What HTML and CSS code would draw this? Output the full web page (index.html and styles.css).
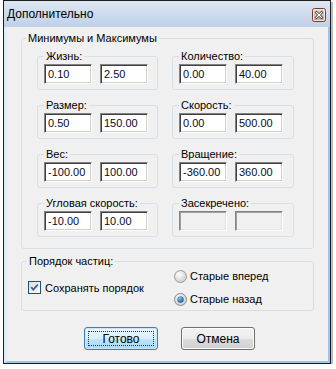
FILE: index.html
```html
<!DOCTYPE html>
<html lang="ru">
<head>
<meta charset="utf-8">
<title>Дополнительно</title>
<link rel="stylesheet" href="styles.css">
</head>
<body>
<div class="window">
  <div class="titlebar">
    <span class="title">Дополнительно</span>
    <span class="close">
      <svg width="14" height="14" viewBox="0 0 14 14">
        <defs>
          <linearGradient id="cg" x1="0" y1="0" x2="0" y2="1">
            <stop offset="0" stop-color="#e9d6cf"/>
            <stop offset="1" stop-color="#c9a496"/>
          </linearGradient>
        </defs>
        <rect x="0.5" y="0.5" width="13" height="13" rx="2" fill="url(#cg)" stroke="#7d3a26"/>
        <rect x="1.5" y="1.5" width="11" height="11" rx="1" fill="none" stroke="#f3e6e0"/>
        <path d="M4.5 4.5 L9.5 9.5 M9.5 4.5 L4.5 9.5" stroke="#3b3b3b" stroke-width="2.6" stroke-linecap="square"/>
        <path d="M4.5 4.5 L9.5 9.5 M9.5 4.5 L4.5 9.5" stroke="#ffffff" stroke-width="1.2" stroke-linecap="square"/>
      </svg>
    </span>
  </div>
  <div class="client">
    <fieldset class="group main">
      <legend>Минимумы и Максимумы</legend>
      <div class="grid">
        <fieldset class="sub"><legend>Жизнь:</legend>
          <div class="pair"><div class="field">0.10</div><div class="field">2.50</div></div>
        </fieldset>
        <fieldset class="sub"><legend>Количество:</legend>
          <div class="pair"><div class="field">0.00</div><div class="field">40.00</div></div>
        </fieldset>
        <fieldset class="sub"><legend>Размер:</legend>
          <div class="pair"><div class="field">0.50</div><div class="field">150.00</div></div>
        </fieldset>
        <fieldset class="sub"><legend>Скорость:</legend>
          <div class="pair"><div class="field">0.00</div><div class="field">500.00</div></div>
        </fieldset>
        <fieldset class="sub"><legend>Вес:</legend>
          <div class="pair"><div class="field">-100.00</div><div class="field">100.00</div></div>
        </fieldset>
        <fieldset class="sub"><legend>Вращение:</legend>
          <div class="pair"><div class="field">-360.00</div><div class="field">360.00</div></div>
        </fieldset>
        <fieldset class="sub"><legend>Угловая скорость:</legend>
          <div class="pair"><div class="field">-10.00</div><div class="field">10.00</div></div>
        </fieldset>
        <fieldset class="sub"><legend>Засекречено:</legend>
          <div class="pair"><div class="field disabled"></div><div class="field disabled"></div></div>
        </fieldset>
      </div>
    </fieldset>
    <fieldset class="group order">
      <legend>Порядок частиц:</legend>
      <div class="order-row">
        <div class="check">
          <span class="cb">
            <svg width="13" height="13" viewBox="0 0 13 13">
              <defs>
                <linearGradient id="cbg" x1="0" y1="0" x2="1" y2="1">
                  <stop offset="0" stop-color="#dcdcd6"/>
                  <stop offset="1" stop-color="#ffffff"/>
                </linearGradient>
              </defs>
              <rect x="0.5" y="0.5" width="12" height="12" fill="url(#cbg)" stroke="#1c5180"/>
              <path d="M3.2 6.2 L5.3 8.6 L9.8 3.6" fill="none" stroke="#4a5a8a" stroke-width="1.8"/>
            </svg>
          </span>
          <span>Сохранять порядок</span>
        </div>
        <div class="radios">
          <div class="radio">
            <svg width="13" height="13" viewBox="0 0 13 13">
              <defs>
                <radialGradient id="rg" cx="0.4" cy="0.35" r="0.7">
                  <stop offset="0" stop-color="#ffffff"/>
                  <stop offset="1" stop-color="#c8c8c8"/>
                </radialGradient>
              </defs>
              <circle cx="6.5" cy="6.5" r="6" fill="url(#rg)" stroke="#9a9a9a"/>
            </svg>
            <span>Старые вперед</span>
          </div>
          <div class="radio">
            <svg width="13" height="13" viewBox="0 0 13 13">
              <defs>
                <radialGradient id="rd" cx="0.4" cy="0.35" r="0.7">
                  <stop offset="0" stop-color="#7fc4f0"/>
                  <stop offset="1" stop-color="#1a4f8a"/>
                </radialGradient>
              </defs>
              <circle cx="6.5" cy="6.5" r="6" fill="url(#rg)" stroke="#8a8a8a"/>
              <circle cx="6.5" cy="6.5" r="3.2" fill="url(#rd)"/>
            </svg>
            <span>Старые назад</span>
          </div>
        </div>
      </div>
    </fieldset>
    <div class="buttons">
      <button class="btn default"><span class="focus">Готово</span></button>
      <button class="btn">Отмена</button>
    </div>
  </div>
</div>
</body>
</html>
```

FILE: styles.css
```css
* { box-sizing: border-box; }

body {
  margin: 0;
  background: #ffffff;
  font-family: "Liberation Sans", Arial, sans-serif;
  font-size: 11px;
  color: #000;
}

.window {
  margin-left: 3px;
  width: 328px;
  height: 364px;
  border: 1px solid #1e1e1e;
  background: #f0f0f0;
  box-shadow: 2px 2px 0 #bdbdbd;
  display: flex;
  flex-direction: column;
}

.titlebar {
  height: 26px;
  flex: none;
  background: linear-gradient(#dde7f4, #bfd0e7);
  display: flex;
  align-items: center;
  justify-content: space-between;
  padding: 0 4px 0 3px;
}

.title {
  font-size: 12px;
  color: #000;
}

.close {
  display: flex;
  margin-top: 2px;
}

.client {
  flex: 1;
  border-left: 3px solid #e4ecf6;
  border-right: 2px solid #9cc6ee;
  border-bottom: 2px solid #9cc6ee;
  padding: 4px 0 0 14px;
  display: flex;
  flex-direction: column;
}

fieldset {
  margin: 0;
  border: 1px solid #d5dfe5;
  border-radius: 3px;
  min-width: 0;
}

legend {
  line-height: 14px;
  padding: 0 2px;
  margin-left: 0;
  white-space: nowrap;
}

.group {
  width: 293px;
}

.main {
  padding: 4px 0 11px 4px;
}

.grid {
  margin-left: 11px;
  display: grid;
  grid-template-columns: 121px 122px;
  column-gap: 14px;
  row-gap: 8px;
}

.sub {
  padding: 1px 6px 5px 6px;
}

.pair {
  display: flex;
  gap: 8px;
}

.field {
  width: 48px;
  height: 20px;
  background: #ffffff;
  border: 1px solid;
  border-color: #828282 #ffffff #ffffff #828282;
  box-shadow: inset 1px 1px 0 #404040, inset -1px -1px 0 #d4d0c8;
  font-size: 11px;
  line-height: 18px;
  padding-left: 3px;
  color: #0a0a28;
  white-space: nowrap;
  overflow: hidden;
}

.field.disabled {
  background: #f0f0f0;
  box-shadow: inset 1px 1px 0 #a0a0a0, inset -1px -1px 0 #e4e4e4;
}

.order {
  margin-top: 5px;
  padding: 0 0 3px 5px;
}

.order-row {
  display: flex;
  align-items: center;
}

.check {
  display: flex;
  align-items: center;
  gap: 4px;
  width: 146px;
  margin-left: 1px;
}

.cb {
  display: flex;
}

.radios {
  display: flex;
  flex-direction: column;
  gap: 7px;
}

.radio {
  display: flex;
  align-items: center;
  gap: 3px;
  height: 16px;
}

.radio svg, .cb svg {
  display: block;
}

.buttons {
  display: flex;
  gap: 23px;
  margin-top: 16px;
  padding-left: 63px;
}

.btn {
  width: 74px;
  height: 23px;
  padding: 0;
  font-family: "Liberation Sans", Arial, sans-serif;
  font-size: 12px;
  color: #000;
  border: 1px solid #707070;
  border-radius: 3px;
  background: linear-gradient(#f3f3f3 0%, #ebebeb 50%, #dddddd 51%, #cfcfcf 100%);
  box-shadow: inset 0 0 0 1px #fbfbfb;
  display: flex;
  align-items: center;
  justify-content: center;
}

.btn.default {
  border-color: #3c7fb1;
  background: linear-gradient(#eaf6fd 0%, #d9f0fc 50%, #bee6fd 51%, #a7d9f5 100%);
  box-shadow: inset 0 0 0 1px #c8e6f8;
}

.focus {
  display: flex;
  align-items: center;
  justify-content: center;
  width: 66px;
  height: 15px;
  border: 1px dotted #333;
}
```
